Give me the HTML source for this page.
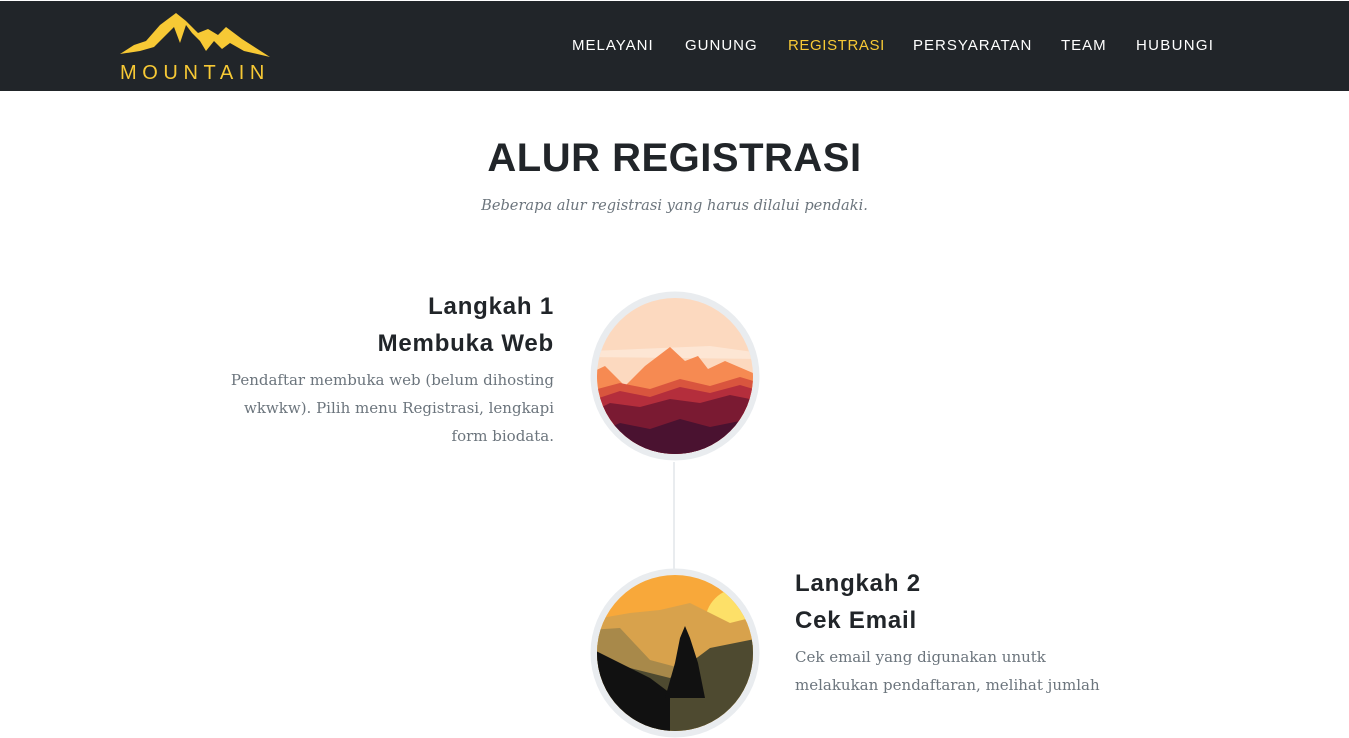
<!DOCTYPE html>
<html><head><meta charset="utf-8"><style>
*{margin:0;padding:0;box-sizing:border-box}
body{width:1349px;height:693px;overflow:hidden;background:#fff;font-family:"Liberation Sans",sans-serif;position:relative}
.nav{position:absolute;top:1px;left:0;width:1349px;height:90px;background:#212529}
.nav a{position:absolute;top:36px;color:#fff;font-size:15px;letter-spacing:1px;text-decoration:none}
h2{position:absolute;top:136px;left:0;width:1349px;text-align:center;font-size:40px;font-weight:700;color:#212529;letter-spacing:.5px}
.sub{position:absolute;top:197px;left:0;width:1349px;text-align:center;font-family:"DejaVu Serif",serif;font-style:italic;font-size:14.6px;color:#6c757d}
.h{position:absolute;font-size:24px;font-weight:700;color:#212529;line-height:37px;letter-spacing:.8px}
.p{position:absolute;font-family:"DejaVu Serif",serif;font-size:15px;color:#6c757d;line-height:28px}
.line{position:absolute;left:673px;top:462px;width:2px;height:108px;background:#e9ecef}
</style></head><body>
<div class="nav">
<svg style="position:absolute;left:118px;top:10px" width="155" height="75" viewBox="0 0 155 75">
<path d="M2 43 L16 34 L28 30 L42 14 L58 2 L68 10 L80 22 L90 18 L100 24 L108 16 L124 28 L152 46 L126 40 L112 32 L104 38 L96 30 L88 40 L82 30 L74 22 L68 14 L62 32 L56 16 L46 26 L36 36 L22 40 Z" fill="#f7c935"/>
<text x="2" y="68" font-family="Liberation Sans,sans-serif" font-size="20" fill="#f7c935" letter-spacing="5.6">MOUNTAIN</text>
</svg>
<a style="left:572px">MELAYANI</a>
<a style="left:685px">GUNUNG</a>
<a style="left:788px;color:#f7c935;letter-spacing:.6px">REGISTRASI</a>
<a style="left:913px">PERSYARATAN</a>
<a style="left:1061px">TEAM</a>
<a style="left:1136px;letter-spacing:1.3px">HUBUNGI</a>
</div>
<h2>ALUR REGISTRASI</h2>
<div class="sub">Beberapa alur registrasi yang harus dilalui pendaki.</div>
<div class="h" style="right:795px;top:288px;text-align:right">Langkah 1<br>Membuka Web</div>
<div class="p" style="right:795px;top:366px;width:360px;text-align:right">Pendaftar membuka web (belum dihosting<br>wkwkw). Pilih menu Registrasi, lengkapi<br>form biodata.</div>
<div class="line"></div>
<svg style="position:absolute;left:590px;top:291px" width="170" height="170">
<defs><clipPath id="c1"><circle cx="85" cy="85" r="78"/></clipPath></defs>
<circle cx="85" cy="85" r="84.5" fill="#e9ecef"/>
<g clip-path="url(#c1)">
<rect width="170" height="170" fill="#fcd9bf"/>
<path d="M0 60 L120 55 L170 62 V68 L0 66Z" fill="#fde6d4"/>
<path d="M0 82 L15 75 L35 95 L55 75 L80 56 L95 70 L108 65 L118 78 L135 70 L170 85 V170 H0Z" fill="#f68a52"/>
<path d="M0 100 L30 92 L60 98 L90 88 L120 95 L150 86 L170 92 V170 H0Z" fill="#d9553e"/>
<path d="M0 110 L30 100 L60 106 L90 96 L120 102 L150 94 L170 100 V170 H0Z" fill="#b42e3c"/>
<path d="M0 122 L20 112 L50 116 L80 108 L110 112 L140 104 L170 110 V170 H0Z" fill="#7a1a32"/>
<path d="M0 145 L30 132 L60 138 L90 128 L120 136 L170 126 V170 H0Z" fill="#4a1230"/>
</g></svg>
<svg style="position:absolute;left:590px;top:568px" width="170" height="170">
<defs><clipPath id="c2"><circle cx="85" cy="85" r="78"/></clipPath></defs>
<circle cx="85" cy="85" r="84.5" fill="#e9ecef"/>
<g clip-path="url(#c2)">
<rect width="170" height="170" fill="#f8a83a"/>
<circle cx="150" cy="55" r="35" fill="#fde068"/>
<path d="M0 52 L40 45 L70 42 L100 35 L120 45 L140 55 L160 50 L170 45 V170 H0Z" fill="#d8a24c"/>
<path d="M0 62 L30 60 L60 92 L90 100 L120 82 L170 75 V170 H0Z" fill="#a8894a"/>
<path d="M0 82 L40 100 L80 110 L120 80 L170 70 V170 H0Z" fill="#4e4a30"/>
<path d="M0 80 L30 95 L60 110 L80 125 V170 H0Z" fill="#111"/>
<path d="M95 58 L100 70 L108 95 L115 130 L75 130 L85 95 L90 70Z" fill="#111"/>
</g></svg>
<div class="h" style="left:795px;top:565px">Langkah 2<br>Cek Email</div>
<div class="p" style="left:795px;top:643px;width:360px">Cek email yang digunakan unutk<br>melakukan pendaftaran, melihat jumlah</div>
</body></html>
